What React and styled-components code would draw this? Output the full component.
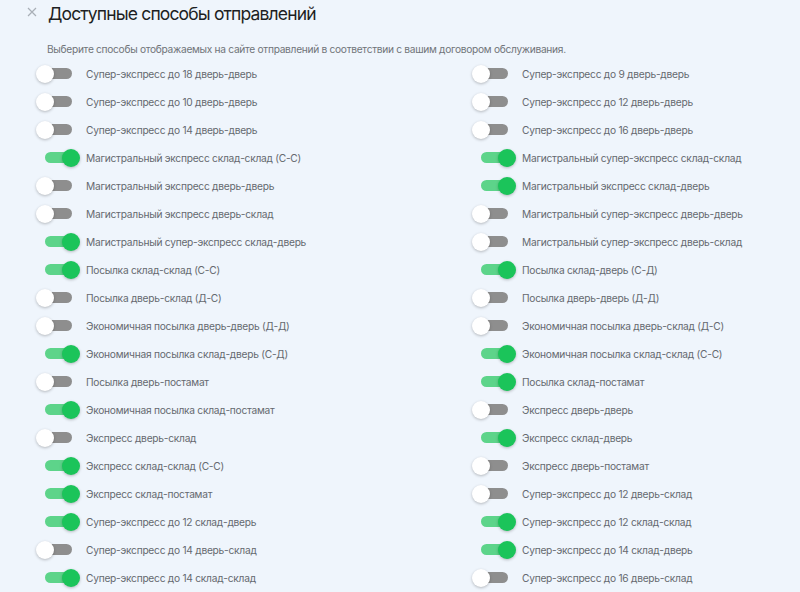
import React, { useState } from 'react'
import styled, { createGlobalStyle } from 'styled-components'

const GlobalStyle = createGlobalStyle`
  html, body {
    margin: 0;
    padding: 0;
    background: #eff5fc;
    overflow: hidden;
  }
  body {
    font-family: Inter, "Noto Sans", sans-serif;
  }
`

const Page = styled.div`
  width: 800px;
  height: 592px;
  background: #eff5fc;
  padding: 0 0 0 36px;
  box-sizing: border-box;
  overflow: hidden;
`

const Header = styled.div`
  display: flex;
  align-items: center;
  height: 30px;
  margin-left: -10px;
  gap: 10px;
`

const Close = styled.button`
  border: 0;
  background: none;
  padding: 0;
  width: 12px;
  height: 12px;
  display: flex;
  margin-top: -6px;
  color: #a9afb7;
  cursor: pointer;
`

const Title = styled.h2`
  margin: 0 0 3px;
  font-size: 17.5px;
  font-weight: 400;
  color: #1d1f23;
  letter-spacing: -0.85px;
`

const Subtitle = styled.p`
  margin: 11px 0 0 11px;
  font-size: 10.2px;
  line-height: 16px;
  color: #707479;
  letter-spacing: -0.3px;
`

const Grid = styled.div`
  display: grid;
  grid-template-columns: 436px 1fr;
  grid-auto-flow: column;
  grid-template-rows: repeat(19, 28px);
  margin-top: 3px;
`

const Row = styled.label`
  display: flex;
  align-items: center;
  gap: 6px;
  cursor: pointer;
`

const Track = styled.span`
  position: relative;
  width: 44px;
  height: 18px;
  flex: none;

  &::before {
    content: '';
    position: absolute;
    left: 9px;
    top: 3px;
    width: 27px;
    height: 11px;
    border-radius: 6px;
    background: ${p => (p.$on ? '#5dd48a' : '#8e8e8e')};
  }
`

const Knob = styled.span`
  position: absolute;
  top: 0;
  left: ${p => (p.$on ? '26px' : '0')};
  width: 18px;
  height: 18px;
  border-radius: 50%;
  background: ${p => (p.$on ? '#1bc45a' : '#ffffff')};
  box-shadow: 0 1px 3px rgba(0, 0, 0, 0.25);
`

const Label = styled.span`
  font-size: 10.2px;
  color: #65696f;
  white-space: nowrap;
  letter-spacing: -0.25px;
`

const left = [
  ['Супер-экспресс до 18 дверь-дверь', false],
  ['Супер-экспресс до 10 дверь-дверь', false],
  ['Супер-экспресс до 14 дверь-дверь', false],
  ['Магистральный экспресс склад-склад (С-С)', true],
  ['Магистральный экспресс дверь-дверь', false],
  ['Магистральный экспресс дверь-склад', false],
  ['Магистральный супер-экспресс склад-дверь', true],
  ['Посылка склад-склад (С-С)', true],
  ['Посылка дверь-склад (Д-С)', false],
  ['Экономичная посылка дверь-дверь (Д-Д)', false],
  ['Экономичная посылка склад-дверь (С-Д)', true],
  ['Посылка дверь-постамат', false],
  ['Экономичная посылка склад-постамат', true],
  ['Экспресс дверь-склад', false],
  ['Экспресс склад-склад (С-С)', true],
  ['Экспресс склад-постамат', true],
  ['Супер-экспресс до 12 склад-дверь', true],
  ['Супер-экспресс до 14 дверь-склад', false],
  ['Супер-экспресс до 14 склад-склад', true],
]

const right = [
  ['Супер-экспресс до 9 дверь-дверь', false],
  ['Супер-экспресс до 12 дверь-дверь', false],
  ['Супер-экспресс до 16 дверь-дверь', false],
  ['Магистральный супер-экспресс склад-склад', true],
  ['Магистральный экспресс склад-дверь', true],
  ['Магистральный супер-экспресс дверь-дверь', false],
  ['Магистральный супер-экспресс дверь-склад', false],
  ['Посылка склад-дверь (С-Д)', true],
  ['Посылка дверь-дверь (Д-Д)', false],
  ['Экономичная посылка дверь-склад (Д-С)', false],
  ['Экономичная посылка склад-склад (С-С)', true],
  ['Посылка склад-постамат', true],
  ['Экспресс дверь-дверь', false],
  ['Экспресс склад-дверь', true],
  ['Экспресс дверь-постамат', false],
  ['Супер-экспресс до 12 дверь-склад', false],
  ['Супер-экспресс до 12 склад-склад', true],
  ['Супер-экспресс до 14 склад-дверь', true],
  ['Супер-экспресс до 16 дверь-склад', false],
]

function Toggle({ on }) {
  return (
    <Track $on={on}>
      <Knob $on={on} />
    </Track>
  )
}

export default function App() {
  const [items, setItems] = useState(() =>
    [...left, ...right].map(([name, on]) => ({ name, on }))
  )

  const toggle = i =>
    setItems(list => list.map((it, j) => (j === i ? { ...it, on: !it.on } : it)))

  return (
    <Page>
      <GlobalStyle />
      <Header>
        <Close aria-label="Закрыть">
          <svg width="12" height="12" viewBox="0 0 12 12">
            <path d="M2 2l8 8M10 2l-8 8" stroke="currentColor" strokeWidth="1.2" />
          </svg>
        </Close>
        <Title>Доступные способы отправлений</Title>
      </Header>
      <Subtitle>
        Выберите способы отображаемых на сайте отправлений в соответствии с вашим договором обслуживания.
      </Subtitle>
      <Grid>
        {items.map((it, i) => (
          <Row key={it.name} onClick={e => { e.preventDefault(); toggle(i) }}>
            <Toggle on={it.on} />
            <Label>{it.name}</Label>
          </Row>
        ))}
      </Grid>
    </Page>
  )
}
